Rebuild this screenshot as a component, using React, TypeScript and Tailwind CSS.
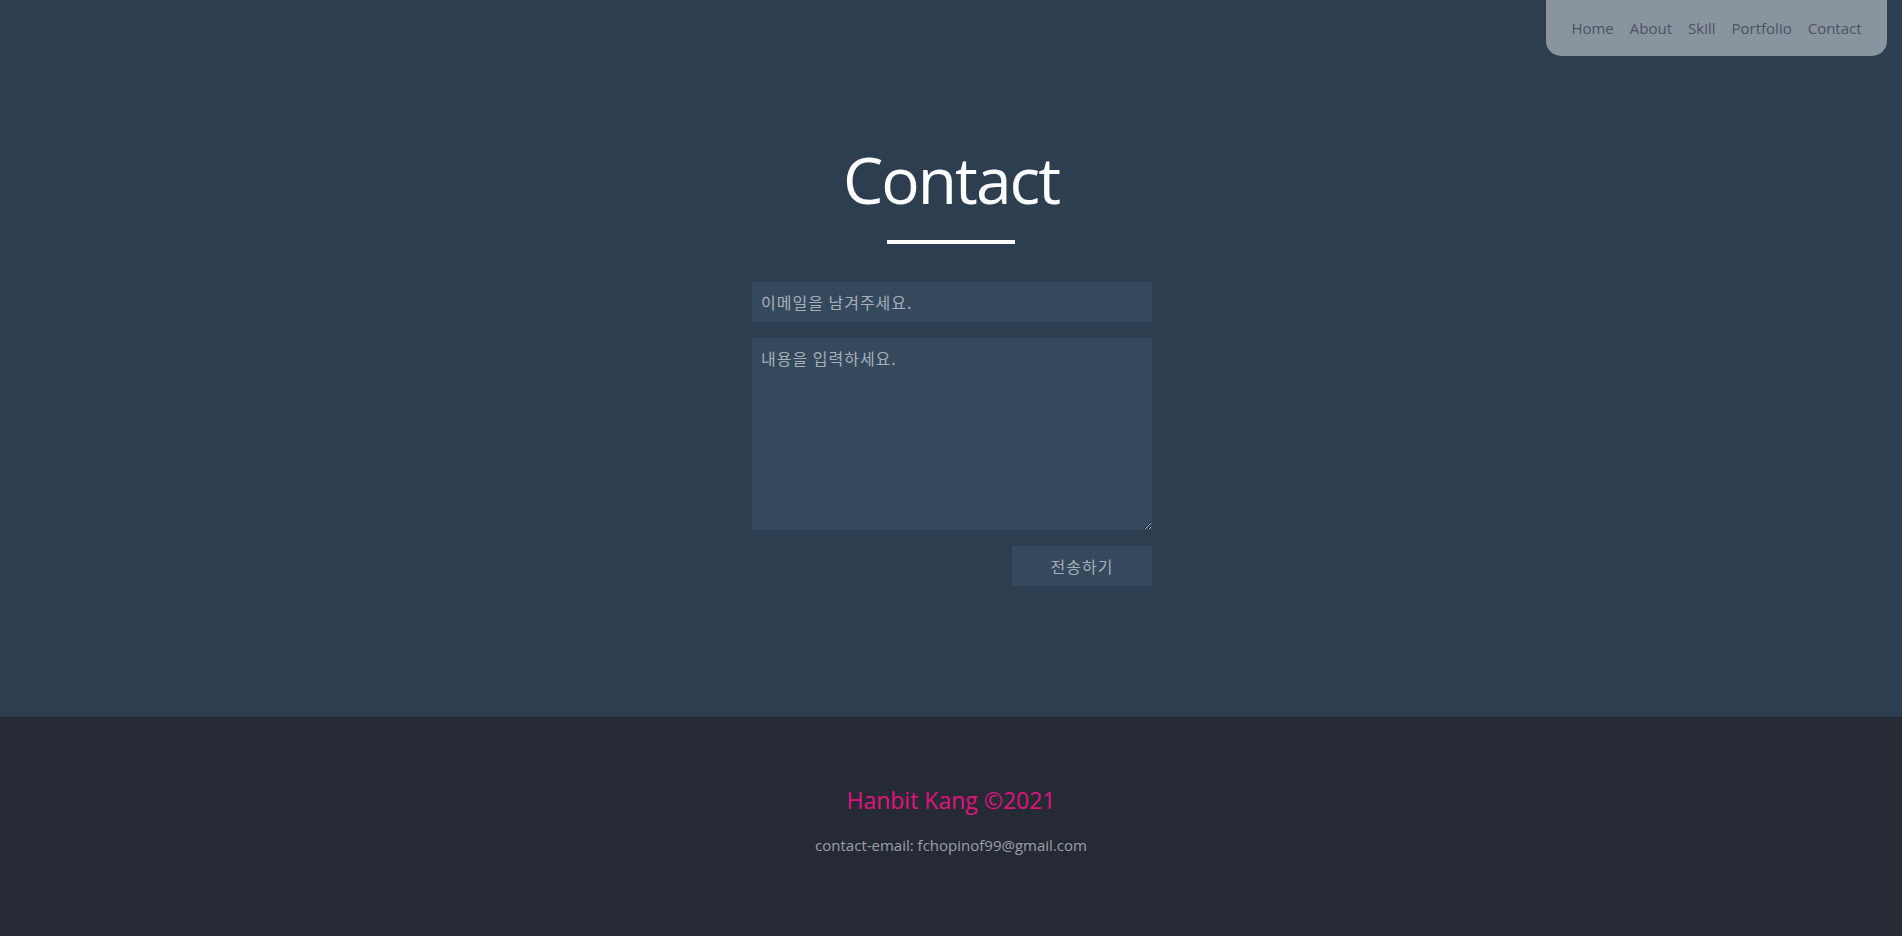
export default function App() {
  const links = ["Home", "About", "Skill", "Portfolio", "Contact"]

  return (
    <div className="min-h-screen bg-[#252a35] font-['Open_Sans','Noto_Sans_CJK_KR',sans-serif]">
      <nav className="fixed top-0 right-[15px] z-10 w-[341px] h-[56px] rounded-b-[15px] bg-[#8a949f] flex items-end justify-center gap-[16px] pb-[20px]">
        {links.map((l) => (
          <a key={l} href="#" className="text-[15px] leading-none text-[#4a5360]">
            {l}
          </a>
        ))}
      </nav>

      <section className="h-[717px] bg-[#2d3e51] flex flex-col items-center pt-[141px]">
        <h1 className="text-[64px] leading-[77px] tracking-[-2px] text-white">Contact</h1>
        <div className="mt-[22px] w-[128px] h-[4px] bg-white"></div>

        <form className="mt-[38px] ml-[2px] w-[400px] flex flex-col gap-[16px]">
          <input
            type="email"
            placeholder="이메일을 남겨주세요."
            className="h-[40px] px-[9px] bg-[#34495e] text-[16px] tracking-[1px] text-[#a7afb8] placeholder:text-[#a7afb8] outline-none font-['Noto_Sans_CJK_KR',sans-serif]"
          />
          <textarea
            placeholder="내용을 입력하세요."
            className="h-[192px] px-[9px] py-[8px] bg-[#34495e] text-[16px] tracking-[1px] text-[#a7afb8] placeholder:text-[#a7afb8] outline-none font-['Noto_Sans_CJK_KR',sans-serif]"
          ></textarea>
          <div className="flex justify-end">
            <button
              type="button"
              className="w-[140px] h-[40px] bg-[#34495e] text-[16px] tracking-[1px] text-[#a7afb8] font-['Noto_Sans_CJK_KR',sans-serif]"
            >
              전송하기
            </button>
          </div>
        </form>
      </section>

      <footer className="h-[219px] flex flex-col items-center pt-[68px]">
        <p className="text-[23px] leading-[30px] text-[#e0137f]">Hanbit Kang ©2021</p>
        <p className="mt-[20px] text-[15px] leading-[20px] text-[#9aa0a8]">contact-email: fchopinof99@gmail.com</p>
      </footer>
    </div>
  )
}
